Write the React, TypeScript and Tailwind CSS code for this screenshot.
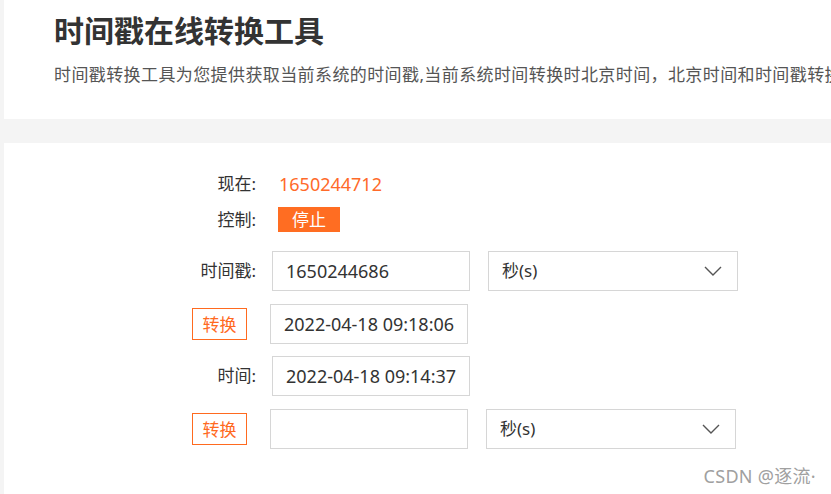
import React from "react";

const Chevron = () => (
  <svg width="18" height="10" viewBox="0 0 18 10" fill="none">
    <polyline points="1,1 9,9 17,1" stroke="#555" strokeWidth="1.4" fill="none" />
  </svg>
);

const Label = ({ children }: { children: React.ReactNode }) => (
  <div className="w-[252px] shrink-0 text-right text-[17px] leading-[24px] text-[#333]">{children}</div>
);

const ConvertBtn = () => (
  <div className="w-[252px] shrink-0 flex justify-end pr-[9px]">
    <div className="w-[55px] h-[32px] border border-[#ff6a1f] text-[#ff6a1f] text-[17px] flex items-center justify-center leading-none">
      转换
    </div>
  </div>
);

const Input = ({ value, ml }: { value?: string; ml: string }) => (
  <div
    className={`${ml} w-[198px] h-[40px] shrink-0 border border-[#d6d6d6] flex items-center pl-[13px] text-[18px] text-[#333] whitespace-nowrap overflow-visible`}
  >
    {value}
  </div>
);

const Select = ({ ml }: { ml: string }) => (
  <div
    className={`${ml} w-[250px] h-[40px] shrink-0 border border-[#d6d6d6] flex items-center justify-between pl-[13px] pr-[15px] text-[17px] text-[#333]`}
  >
    <span>秒(s)</span>
    <Chevron />
  </div>
);

export default function App() {
  return (
    <div
      className="relative w-[831px] h-[494px] overflow-hidden bg-[#f4f4f4] pl-[4px] flex flex-col"
      style={{ fontFamily: '"Noto Sans", "Noto Sans CJK SC", sans-serif' }}
    >
      <div className="bg-white h-[119px] shrink-0 pl-[50px] pt-[11px] whitespace-nowrap overflow-hidden">
        <div className="text-[30px] leading-[40px] font-bold text-[#333]">时间戳在线转换工具</div>
        <div className="mt-[12px] text-[17px] leading-[24px] tracking-[0.4px] text-[#555]">
          时间戳转换工具为您提供获取当前系统的时间戳,当前系统时间转换时北京时间，北京时间和时间戳转换
        </div>
      </div>
      <div className="mt-[24px] bg-white flex-1 pt-[29px]">
        <div className="flex items-center h-[24px]">
          <Label>现在:</Label>
          <div className="ml-[23px] text-[18px] leading-[24px] text-[#ff6a2a]">1650244712</div>
        </div>
        <div className="flex items-center h-[25px] mt-[11px]">
          <Label>控制:</Label>
          <div className="ml-[22px] w-[62px] h-[25px] bg-[#ff6d22] text-white text-[17px] flex items-center justify-center leading-none">
            停止
          </div>
        </div>
        <div className="flex items-center h-[40px] mt-[19px]">
          <Label>时间戳:</Label>
          <Input ml="ml-[16px]" value="1650244686" />
          <Select ml="ml-[18px]" />
        </div>
        <div className="flex items-center h-[40px] mt-[13px]">
          <ConvertBtn />
          <Input ml="ml-[14px]" value="2022-04-18 09:18:06" />
        </div>
        <div className="flex items-center h-[40px] mt-[12px]">
          <Label>时间:</Label>
          <Input ml="ml-[16px]" value="2022-04-18 09:14:37" />
        </div>
        <div className="flex items-center h-[40px] mt-[13px]">
          <ConvertBtn />
          <Input ml="ml-[14px]" />
          <Select ml="ml-[18px]" />
        </div>
      </div>
      <div className="absolute right-[15px] bottom-[7px] text-[18px] leading-[22px] tracking-[0.3px] text-[#a0a0a0]">CSDN @逐流·</div>
    </div>
  );
}
